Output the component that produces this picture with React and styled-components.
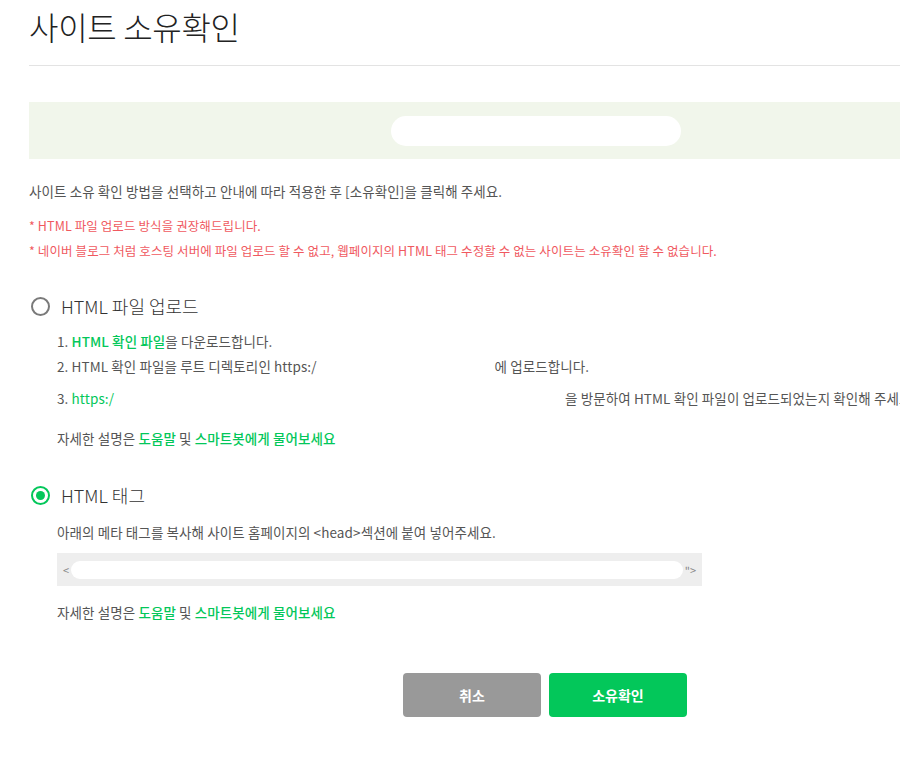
import React from "react";
import styled, { createGlobalStyle } from "styled-components";

const GlobalStyle = createGlobalStyle`
  html, body {
    margin: 0;
    padding: 0;
    background: #fff;
    overflow-x: hidden;
  }
  body {
    font-family: "Noto Sans CJK KR", "Noto Sans", sans-serif;
    color: #555;
  }
`;

const Page = styled.div`
  padding: 0 0 40px 29px;
  width: 871px;
`;

const Title = styled.h1`
  margin: 0;
  padding-top: 4px;
  height: 61px;
  font-size: 32px;
  font-weight: 300;
  letter-spacing: -0.3px;
  color: #222;
  line-height: 44px;
  border-bottom: 1px solid #e3e3e3;
`;

const Banner = styled.div`
  margin-top: 36px;
  height: 57px;
  background: #f1f6eb;
  display: flex;
  align-items: center;
  padding-left: 362px;
`;

const Blot = styled.span`
  display: inline-block;
  width: ${({ w }) => w}px;
  height: ${({ h }) => h || 16}px;
  background: #fff;
  border-radius: ${({ h }) => (h || 16) / 2}px;
  vertical-align: middle;
`;

const Intro = styled.p`
  margin: 22px 0 0;
  font-size: 13.5px;
  letter-spacing: 0.1px;
  line-height: 20px;
  color: #555;
`;

const Notes = styled.ul`
  list-style: none;
  margin: 12px 0 0;
  padding: 0;
  li {
    font-size: 12.5px;
    letter-spacing: 0.1px;
    line-height: 25px;
    color: #f0595f;
  }
`;

const Method = styled.section`
  margin-top: ${({ top }) => top}px;
`;

const RadioRow = styled.label`
  display: flex;
  align-items: center;
  gap: 11px;
  font-size: 18px;
  font-weight: 300;
  color: #333;
  line-height: 24px;
  margin-left: 2px;
`;

const Radio = styled.span`
  box-sizing: border-box;
  width: 19px;
  height: 19px;
  border-radius: 50%;
  border: 2px solid ${({ checked }) => (checked ? "#03c75a" : "#7a7a7a")};
  display: flex;
  align-items: center;
  justify-content: center;
  &::after {
    content: "";
    display: ${({ checked }) => (checked ? "block" : "none")};
    width: 9px;
    height: 9px;
    border-radius: 50%;
    background: #03c75a;
  }
`;

const Body = styled.div`
  padding-left: 28px;
  margin-top: ${({ top }) => top || 11}px;
`;

const Steps = styled.ol`
  list-style: none;
  margin: 0;
  padding: 0;
  li {
    font-size: 13.5px;
    letter-spacing: 0.1px;
    line-height: 25px;
    color: #555;
    white-space: nowrap;
  }
  li:nth-child(3) {
    margin-top: 7px;
  }
`;

const Green = styled.span`
  color: #03c75a;
  font-weight: ${({ bold }) => (bold ? 500 : 400)};
`;

const Help = styled.p`
  margin: ${({ top }) => top}px 0 0;
  font-size: 13.5px;
  letter-spacing: 0.1px;
  line-height: 20px;
  color: #555;
`;

const Desc = styled.p`
  margin: 0;
  font-size: 13.5px;
  letter-spacing: 0.1px;
  line-height: 20px;
  color: #555;
`;

const CodeBox = styled.div`
  margin-top: 11px;
  width: 645px;
  height: 33px;
  box-sizing: border-box;
  background: #eeeeee;
  display: flex;
  align-items: center;
  padding: 0 6px;
  gap: 2px;
  font-size: 11px;
  color: #888;
`;

const Actions = styled.div`
  margin-top: 51px;
  display: flex;
  gap: 8px;
  padding-left: 374px;
`;

const Button = styled.button`
  width: 138px;
  height: 44px;
  border: 0;
  border-radius: 4px;
  background: ${({ primary }) => (primary ? "#03c75a" : "#999999")};
  color: #fff;
  font-family: "Noto Sans CJK KR", sans-serif;
  font-size: 14px;
  font-weight: 700;
  cursor: pointer;
`;

const App = () => {
  return (
    <>
      <GlobalStyle />
      <Page>
        <Title>사이트 소유확인</Title>
        <Banner>
          <Blot w={290} h={30} />
        </Banner>

        <Intro>
          사이트 소유 확인 방법을 선택하고 안내에 따라 적용한 후 [소유확인]을 클릭해 주세요.
        </Intro>
        <Notes>
          <li>* HTML 파일 업로드 방식을 권장해드립니다.</li>
          <li>
            * 네이버 블로그 처럼 호스팅 서버에 파일 업로드 할 수 없고, 웹페이지의 HTML 태그
            수정할 수 없는 사이트는 소유확인 할 수 없습니다.
          </li>
        </Notes>

        <Method top={31}>
          <RadioRow>
            <Radio />
            HTML 파일 업로드
          </RadioRow>
          <Body>
            <Steps>
              <li>
                1. <Green bold>HTML 확인 파일</Green>을 다운로드합니다.
              </li>
              <li>
                2. HTML 확인 파일을 루트 디렉토리인 https:/
                <Blot w={178} h={14} />에 업로드합니다.
              </li>
              <li>
                3. <Green>https:/</Green>
                <Blot w={451} h={14} />을 방문하여 HTML 확인 파일이 업로드되었는지 확인해
                주세요.
              </li>
            </Steps>
            <Help top={17}>
              자세한 설명은 <Green bold>도움말</Green> 및 <Green bold>스마트봇에게 물어보세요</Green>
            </Help>
          </Body>
        </Method>

        <Method top={35}>
          <RadioRow>
            <Radio checked />
            HTML 태그
          </RadioRow>
          <Body top={15}>
            <Desc>아래의 메타 태그를 복사해 사이트 홈페이지의 &lt;head&gt;섹션에 붙여 넣어주세요.</Desc>
            <CodeBox>
              &lt;
              <Blot w={614} h={18} />
              "&gt;
            </CodeBox>
            <Help top={16}>
              자세한 설명은 <Green bold>도움말</Green> 및 <Green bold>스마트봇에게 물어보세요</Green>
            </Help>
          </Body>
        </Method>

        <Actions>
          <Button>취소</Button>
          <Button primary>소유확인</Button>
        </Actions>
      </Page>
    </>
  );
};

export default App;
